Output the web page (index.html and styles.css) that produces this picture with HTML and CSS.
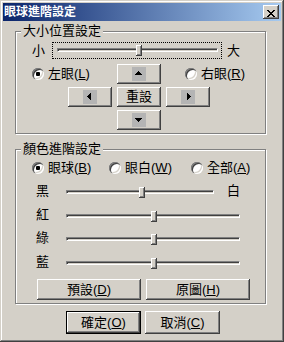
FILE: index.html
```html
<!DOCTYPE html>
<html lang="zh-Hant">
<head>
  <meta charset="UTF-8">
  <title>眼球進階設定</title>
  <link rel="stylesheet" href="styles.css">
</head>
<body>

  <div class="window">
    <!-- 標題列 -->
    <div class="titlebar">
      <span class="title">眼球進階設定</span>
      <button class="close" aria-label="關閉">
        <svg width="8" height="7" viewBox="0 0 8 7" shape-rendering="crispEdges">
          <rect x="0" y="0" width="2" height="1"/><rect x="6" y="0" width="2" height="1"/>
          <rect x="1" y="1" width="2" height="1"/><rect x="5" y="1" width="2" height="1"/>
          <rect x="2" y="2" width="4" height="1"/>
          <rect x="3" y="3" width="2" height="1"/>
          <rect x="2" y="4" width="4" height="1"/>
          <rect x="1" y="5" width="2" height="1"/><rect x="5" y="5" width="2" height="1"/>
          <rect x="0" y="6" width="2" height="1"/><rect x="6" y="6" width="2" height="1"/>
        </svg>
      </button>
    </div>

    <div class="client">
      <!-- 大小位置 -->
      <fieldset class="group group-pos">
        <legend>大小位置設定</legend>
        <div class="group-body pos-body">
          <div class="size-row">
            <span class="lbl">小</span>
            <div class="focus">
              <div class="track"><span class="thumb" style="left:49%"></span></div>
            </div>
            <span class="lbl">大</span>
          </div>

          <div class="pad">
            <span class="opt eye-left"><span class="radio checked"></span><span>左眼(<u>L</u>)</span></span>
            <button class="btn arrow up">
              <svg width="14" height="14" viewBox="0 0 14 14" shape-rendering="crispEdges">
                <rect width="14" height="14" fill="#b4b4b4"/>
                <rect x="6" y="4" width="1" height="1"/><rect x="5" y="5" width="3" height="1"/>
                <rect x="4" y="6" width="5" height="1"/><rect x="3" y="7" width="7" height="1"/>
              </svg>
            </button>
            <span class="opt eye-right"><span class="radio"></span><span>右眼(<u>R</u>)</span></span>

            <button class="btn arrow left">
              <svg width="14" height="14" viewBox="0 0 14 14" shape-rendering="crispEdges">
                <rect width="14" height="14" fill="#b4b4b4"/>
                <rect x="4" y="6" width="1" height="1"/><rect x="5" y="5" width="1" height="3"/>
                <rect x="6" y="4" width="1" height="5"/><rect x="7" y="3" width="1" height="7"/>
              </svg>
            </button>
            <button class="btn reset">重設</button>
            <button class="btn arrow right">
              <svg width="14" height="14" viewBox="0 0 14 14" shape-rendering="crispEdges">
                <rect width="14" height="14" fill="#b4b4b4"/>
                <rect x="6" y="3" width="1" height="7"/><rect x="7" y="4" width="1" height="5"/>
                <rect x="8" y="5" width="1" height="3"/><rect x="9" y="6" width="1" height="1"/>
              </svg>
            </button>

            <button class="btn arrow down">
              <svg width="14" height="14" viewBox="0 0 14 14" shape-rendering="crispEdges">
                <rect width="14" height="14" fill="#b4b4b4"/>
                <rect x="3" y="5" width="7" height="1"/><rect x="4" y="6" width="5" height="1"/>
                <rect x="5" y="7" width="3" height="1"/><rect x="6" y="8" width="1" height="1"/>
              </svg>
            </button>
          </div>
        </div>
      </fieldset>

      <!-- 顏色 -->
      <fieldset class="group group-color">
        <legend>顏色進階設定</legend>
        <div class="group-body color-body">
          <div class="target-row">
            <span class="opt"><span class="radio checked"></span><span>眼球(<u>B</u>)</span></span>
            <span class="opt"><span class="radio"></span><span>眼白(<u>W</u>)</span></span>
            <span class="opt"><span class="radio"></span><span>全部(<u>A</u>)</span></span>
          </div>

          <div class="sliders">
            <div class="slider-row tall">
              <span class="lbl">黑</span>
              <div class="track short"><span class="thumb" style="left:49%"></span></div>
              <span class="lbl end">白</span>
            </div>
            <div class="slider-row">
              <span class="lbl">紅</span>
              <div class="track"><span class="thumb" style="left:49%"></span></div>
            </div>
            <div class="slider-row tall">
              <span class="lbl">綠</span>
              <div class="track"><span class="thumb" style="left:49%"></span></div>
            </div>
            <div class="slider-row">
              <span class="lbl">藍</span>
              <div class="track"><span class="thumb" style="left:49%"></span></div>
            </div>
          </div>

          <div class="group-buttons">
            <button class="btn wide">預設(<u>D</u>)</button>
            <button class="btn wide">原圖(<u>H</u>)</button>
          </div>
        </div>
      </fieldset>

      <div class="dialog-buttons">
        <button class="btn dlg default">確定(<u>O</u>)</button>
        <button class="btn dlg">取消(<u>C</u>)</button>
      </div>
    </div>
  </div>

</body>
</html>
```

FILE: styles.css
```css
* {
  box-sizing: border-box;
}

body {
  margin: 0;
  background: #d4d0c8;
  font: 13px/14px "Liberation Sans", "Noto Sans CJK TC", sans-serif;
  color: #000;
}

u {
  text-decoration-thickness: 1px;
  text-underline-offset: 1px;
}

.window {
  width: 284px;
  height: 342px;
  padding: 3px;
  background: #d4d0c8;
  box-shadow: inset -1px -1px #404040, inset 1px 1px #d4d0c8,
              inset -2px -2px #808080, inset 2px 2px #fff;
}

/* title bar */
.titlebar {
  height: 18px;
  display: flex;
  align-items: center;
  justify-content: space-between;
  padding: 0 2px 0 1px;
  background: linear-gradient(to right, #0a246a, #a6caf0);
}

.title {
  color: #fff;
  font-weight: 700;
  font-size: 12px;
}

button {
  font: inherit;
  color: #000;
  margin: 0;
  padding: 0;
  border: 0;
  background: #d4d0c8;
  cursor: pointer;
}

.btn, .close, .thumb {
  box-shadow: inset -1px -1px #404040, inset 1px 1px #fff,
              inset -2px -2px #808080, inset 2px 2px #d4d0c8;
}

.close {
  width: 16px;
  height: 14px;
  display: block;
}

.close svg {
  display: block;
  margin: 3px auto 0;
}

/* group boxes */
.client {
  padding-top: 3px;
}

.group {
  margin: 0 0 0 12px;
  padding: 0;
  min-width: 0;
  width: 251px;
  border: 1px solid #808080;
  box-shadow: inset 1px 1px #fff, 1px 1px #fff;
}

.group legend {
  margin-left: 5px;
  padding: 0 2px;
  background: #d4d0c8;
  line-height: 14px;
}

.group-color {
  margin-top: 8px;
}

.group-body {
  padding: 4px 0 3px 16px;
}

.color-body {
  padding-top: 5px;
}

.lbl {
  width: 13px;
  flex: none;
}

/* size slider */
.size-row {
  display: flex;
  align-items: center;
  height: 17px;
}

.focus {
  width: 170px;
  height: 17px;
  margin: 0 5px 0 7px;
  padding: 5px 3px 0 4px;
  border: 1px dotted #000;
}

.track {
  position: relative;
  height: 4px;
  background: #d4d0c8;
  border: 1px solid;
  border-color: #808080 #fff #fff #808080;
  box-shadow: inset 1px 1px #404040;
}

.thumb {
  position: absolute;
  top: -4px;
  width: 6px;
  height: 11px;
  background: #d4d0c8;
}

/* arrow pad */
.pad {
  display: grid;
  grid-template-columns: 36px 49px 49px 44px 1fr;
  grid-template-rows: 20px 20px 20px;
  row-gap: 3px;
  margin-top: 5px;
}

.pad .btn {
  width: 44px;
  height: 20px;
}

.arrow {
  display: flex;
  align-items: center;
  justify-content: center;
}

.arrow svg {
  display: block;
}

.eye-left {
  grid-column: 1 / span 2;
  grid-row: 1;
}

.up {
  grid-column: 3;
  grid-row: 1;
}

.eye-right {
  grid-column: 4 / span 2;
  grid-row: 1;
  margin-left: 19px;
}

.left {
  grid-column: 2;
  grid-row: 2;
}

.reset {
  grid-column: 3;
  grid-row: 2;
}

.right {
  grid-column: 4;
  grid-row: 2;
}

.down {
  grid-column: 3;
  grid-row: 3;
}

/* radios */
.opt {
  display: flex;
  align-items: center;
  gap: 4px;
  white-space: nowrap;
  align-self: center;
}

.radio {
  position: relative;
  width: 12px;
  height: 12px;
  flex: none;
  border-radius: 50%;
  background: #fff;
  box-shadow: inset 1px 1px #808080, inset 2px 2px #404040,
              inset -1px -1px #fff, inset -2px -2px #d4d0c8;
}

.radio.checked::after {
  content: "";
  position: absolute;
  left: 4px;
  top: 4px;
  width: 4px;
  height: 4px;
  border-radius: 1px;
  background: #000;
}

/* color group */
.target-row {
  display: grid;
  grid-template-columns: 77px 82px auto;
  height: 14px;
}

.sliders {
  margin-top: 5px;
}

.slider-row {
  display: flex;
  align-items: flex-start;
  height: 23px;
}

.slider-row.tall {
  height: 24px;
}

.slider-row .lbl {
  width: 34px;
  padding-left: 4px;
  margin-top: 4px;
}

.slider-row .lbl.end {
  width: 13px;
  padding-left: 0;
  margin-left: 13px;
}

.slider-row .track {
  width: 174px;
  margin-top: 10px;
}

.slider-row .track.short {
  width: 148px;
}

.group-buttons {
  display: flex;
  gap: 5px;
  margin: 5px 0 0 5px;
}

.btn.wide {
  width: 104px;
  height: 21px;
}

/* dialog buttons */
.dialog-buttons {
  display: flex;
  gap: 4px;
  margin: 7px 0 0 63px;
}

.btn.dlg {
  width: 75px;
  height: 23px;
}

.btn.default {
  border: 1px solid #000;
}
```
